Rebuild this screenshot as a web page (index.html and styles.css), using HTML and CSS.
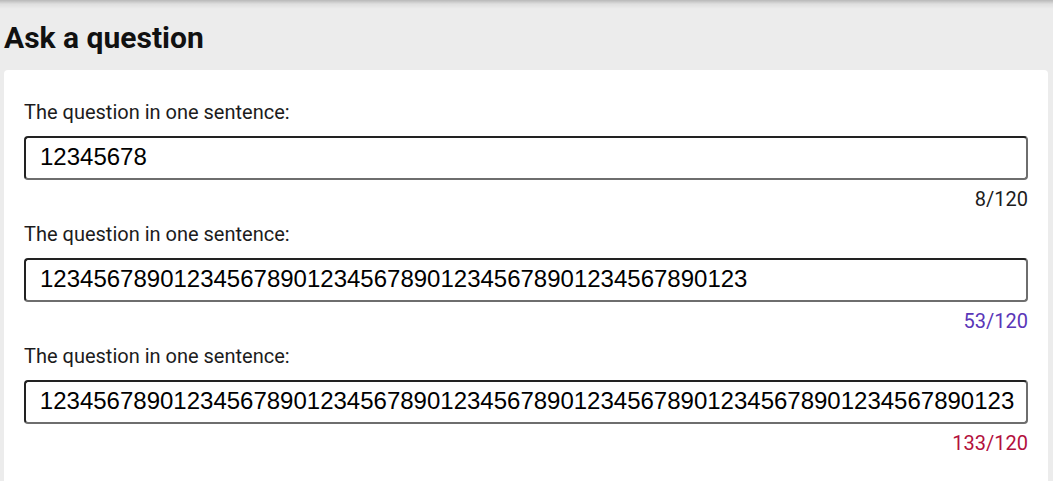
FILE: index.html
```
<!DOCTYPE html>
<html lang="en">
<head>
<meta charset="utf-8">
<title>Ask a question</title>
<link rel="stylesheet" href="styles.css">
</head>
<body>
<main class="page">
  <h1 class="page-title">Ask a question</h1>
  <section class="card">
    <div class="field">
      <label class="field-label" for="q1">The question in one sentence:</label>
      <input class="field-input" id="q1" type="text" value="12345678">
      <div class="field-counter">8/120</div>
    </div>
    <div class="field">
      <label class="field-label" for="q2">The question in one sentence:</label>
      <input class="field-input" id="q2" type="text" value="12345678901234567890123456789012345678901234567890123">
      <div class="field-counter field-counter--warn">53/120</div>
    </div>
    <div class="field">
      <label class="field-label" for="q3">The question in one sentence:</label>
      <input class="field-input field-input--end" id="q3" type="text" value="1234567890123456789012345678901234567890123456789012345678901234567890123456789012345678901234567890123456789012345678901234567890123">
      <div class="field-counter field-counter--over">133/120</div>
    </div>
  </section>
</main>
<script src="script.js"></script>
</body>
</html>
```
FILE: styles.css
```
html, body {
  margin: 0;
  padding: 0;
}

body {
  background-color: #ececec;
  background-image: linear-gradient(to bottom, rgba(0, 0, 0, 0.22) 0, rgba(0, 0, 0, 0.06) 4px, rgba(0, 0, 0, 0) 9px);
  background-repeat: no-repeat;
  font-family: Roboto, "Liberation Sans", Arial, sans-serif;
  color: #1a1a1a;
  height: 481px;
  overflow: hidden;
}

.page {
  padding: 20px 5px 0 4px;
}

.page-title {
  margin: 0 0 14px 0;
  font-size: 30px;
  line-height: 36px;
  font-weight: 700;
  color: #111;
}

.card {
  background: #fff;
  border-radius: 4px;
  padding: 30px 20px 40px 20px;
  display: flex;
  flex-direction: column;
  gap: 11px;
}

.field {
  display: flex;
  flex-direction: column;
}

.field-label {
  font-size: 20px;
  line-height: 24px;
  margin-bottom: 12px;
  color: #1c1c1c;
}

.field-input {
  box-sizing: border-box;
  width: 100%;
  height: 44px;
  margin: 0;
  padding: 5px 12px 7px 14px;
  border-width: 2px;
  border-style: solid;
  border-color: #222 #6e6e6e #6e6e6e #222;
  border-radius: 4px;
  font-family: "Liberation Sans", Arial, sans-serif;
  font-size: 24px;
  line-height: 28px;
  color: #000;
  background: #fff;
  outline: none;
}

.field-counter {
  margin-top: 7px;
  font-size: 20px;
  line-height: 24px;
  text-align: right;
  color: #1c1c1c;
}

.field-counter--warn {
  color: #5a36b8;
}

.field-counter--over {
  color: #b3103d;
}
```
FILE: script.js
```
document.querySelectorAll('.field-input--end').forEach(function (el) {
  el.scrollLeft = el.scrollWidth;
});
```
